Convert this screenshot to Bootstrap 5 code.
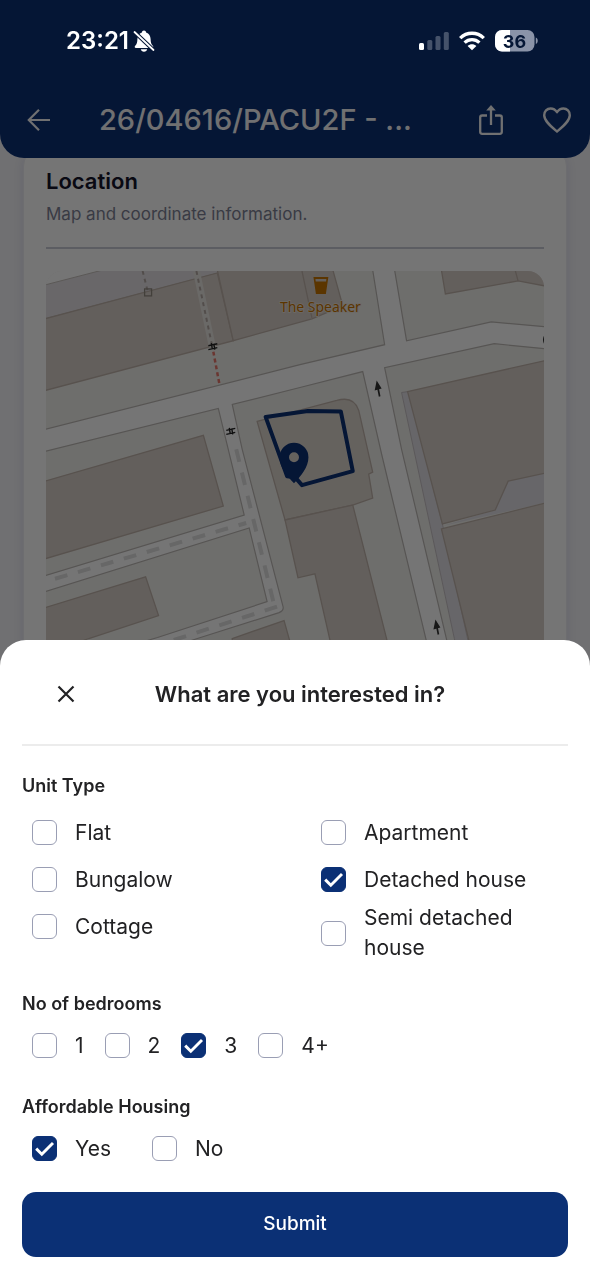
<!DOCTYPE html>
<html lang="en">
<head>
<meta charset="utf-8">
<meta name="viewport" content="width=device-width, initial-scale=1">
<title>Planning application</title>
<link href="https://cdn.jsdelivr.net/npm/bootstrap@5.3.0/dist/css/bootstrap.min.css" rel="stylesheet">
<style>
  :root { --brand: #0b3075; --ink: #222224; }
  body { font-family: Inter, "Liberation Sans", sans-serif; background: #f4f4f8; color: var(--ink); overflow: hidden; }

  .status-bar { height: 82px; gap: 10px; padding: 0 52px 0 66px; z-index: 1060; color: #fff; }
  .status-time { font-size: 24px; font-weight: 600; line-height: 32px; }
  .app-bar { padding: 82px 12px 0 18px; background: var(--brand); border-radius: 0 0 24px 24px; z-index: 1020; }
  .app-bar-row { height: 76px; }
  .app-title { font-size: 29px; font-weight: 500; line-height: 36px; color: #f4f4f6; margin-left: 39px; }
  .bar-btn { width: 42px; height: 42px; padding: 0; border: 0; color: #f4f4f6; line-height: 0; }
  .bar-btn svg { display: block; margin: auto; }

  .info-card { margin: -8px 23px 0; padding: 16px 22px 22px; border: 1px solid #eeeef4; border-radius: 16px; box-shadow: 0 2px 12px #dcdcec; }
  .info-title { font-size: 22px; font-weight: 600; line-height: 28px; color: #14142b; }
  .info-text { font-size: 17px; line-height: 26px; margin-top: 6px; color: #7d8195; }
  .info-rule { margin: 20px 0 22px; border-top: 2px solid #c8cad6; opacity: 1; }
  .map-view { border-radius: 16px; overflow: hidden; }

  .scrim { background: rgba(0, 0, 0, .54); z-index: 1040; }
  .sheet { z-index: 1050; padding: 0 22px 23px; border-radius: 26px 26px 0 0; max-height: 100vh; overflow-y: auto; }
  .sheet-head { height: 106px; padding: 4px 78px 0 0; border-bottom: 2px solid #ececec; }
  .close-btn { width: 88px; height: 48px; padding: 0; border: 0; color: var(--ink); }
  .sheet-title { font-size: 22px; font-weight: 600; line-height: 28px; }
  .group { margin-top: 26px; }
  .group-units { margin-top: 28px; }
  .group legend, .group-units legend { font-size: 18px; font-weight: 600; line-height: 24px; margin-bottom: 6px; }
  .unit-cols { column-gap: 32px; padding: 5px 0 3px; }
  .choice { min-height: 47px; padding-left: 10px; gap: 18px; font-size: 21px; line-height: 30px; }
  .choice .form-check-input { width: 25px; height: 25px; margin: 0; border: 1px solid #9a9eb4; border-radius: 6px; }
  .choice .form-check-input:checked { background-color: var(--brand); border-color: var(--brand);
    background-size: 25px 25px; background-position: center;
    background-image: url("data:image/svg+xml,%3Csvg xmlns='http://www.w3.org/2000/svg' viewBox='0 0 25 25'%3E%3Cpath fill='none' stroke='white' stroke-width='2.9' d='M4.2 12.6l5.6 5.6L21 7'/%3E%3C/svg%3E"); }
  .gap-bedrooms { column-gap: 11px; }
  .gap-yesno { column-gap: 31px; }
  .submit-btn { height: 65px; margin-top: 20px; font-size: 19px; font-weight: 500; color: #fff; background: var(--brand); border: 0; border-radius: 14px; }
  .submit-btn:hover { background: #092760; color: #fff; }
</style>
</head>
<body>

<div class="status-bar fixed-top d-flex align-items-center">
  <div class="d-flex align-items-center gap-1 me-auto">
    <span class="status-time">23:21</span>
    <svg width="22" height="24" viewBox="0 0 22 24" aria-label="Silent">
      <path fill="#fff" d="M11 1.500c1.300 0 2 .8 2.100 1.900 3 .9 4.400 3.500 4.500 6.600.1 3.600.5 5.100 2.200 6.700.9.900.6 2.300-.8 2.300H3c-1.400 0-1.700-1.400-.8-2.300C3.900 15.100 4.300 13.600 4.400 10c.1-3.100 1.500-5.700 4.500-6.600C9 2.300 9.700 1.500 11 1.500zM7.800 20.300h6.400c-.3 1.500-1.500 2.400-3.200 2.400s-2.900-.9-3.200-2.400z"/>
      <path stroke="#051635" stroke-width="4" d="M1 2.500l20 19"/>
      <path stroke="#fff" stroke-width="1.800" stroke-linecap="round" d="M1.500 3l19 18"/>
    </svg>
  </div>
  <svg width="30" height="20" viewBox="0 0 30 20" aria-label="Signal">
    <rect x="0" y="12" width="5" height="7" rx="1.500" fill="#fff"/>
    <g fill="#fff" opacity=".26"><rect x="8.300" y="9" width="5" height="10" rx="1.500"/><rect x="16.500" y="5" width="5" height="14" rx="1.500"/><rect x="24.800" y="1" width="5" height="18" rx="1.500"/></g>
  </svg>
  <svg width="26" height="20" viewBox="0 0 26 20" fill="none" stroke="#fff" aria-label="Wi-Fi">
    <path stroke-width="3.300" d="M1.200 7.100C7.800.6 18.200.6 24.800 7.100"/>
    <path stroke-width="3.300" d="M5.600 11.600c4.200-4 10.600-4 14.800 0"/>
    <path fill="#fff" stroke="none" d="M13 19.300l-4.400-4.400c2.500-2.100 6.300-2.100 8.800 0z"/>
  </svg>
  <svg width="43" height="22" viewBox="0 0 43 22" aria-label="Battery">
    <rect width="39.500" height="21.500" rx="7" fill="#8a93a8"/>
    <path fill="#fff" d="M15 0H7a7 7 0 0 0-7 7v7.500a7 7 0 0 0 7 7h8z"/>
    <path fill="#8a93a8" d="M40.800 7.500c2.600 1.200 2.600 5.300 0 6.500z"/>
    <text x="19.500" y="17.500" font-size="18" font-weight="700" text-anchor="middle" fill="#051635">36</text>
  </svg>
</div>

<header class="app-bar position-relative">
  <div class="app-bar-row d-flex align-items-center">
    <button class="bar-btn btn" type="button" aria-label="Back">
      <svg width="26" height="26" viewBox="0 0 26 26" fill="none" stroke="currentColor" stroke-width="2.200"><path d="M24 13H3M13 2.800L2.800 13 13 23.200"/></svg>
    </button>
    <h1 class="app-title mb-0 flex-fill text-truncate">26/04616/PACU2F - ...</h1>
    <button class="bar-btn btn" type="button" aria-label="Share">
      <svg width="26" height="32" viewBox="0 0 26 32" fill="none" stroke="currentColor" stroke-width="2.300"><path d="M9 11.500H4.200a2 2 0 0 0-2 2v14.300a2 2 0 0 0 2 2h17.600a2 2 0 0 0 2-2V13.500a2 2 0 0 0-2-2H17M13 21V3"/><path d="M13 1l4.800 5.400H8.200z" fill="currentColor" stroke="none"/></svg>
    </button>
    <button class="bar-btn btn ms-4" type="button" aria-label="Save">
      <svg width="30" height="28" viewBox="0 0 30 28" fill="none" stroke="currentColor" stroke-width="2.400" stroke-linejoin="round"><path d="M15 25.500C9 20.400 2.200 15 2.200 9.200 2.200 5.300 5 2.500 8.600 2.500c2.600 0 4.900 1.400 6.400 3.700 1.500-2.300 3.800-3.700 6.400-3.700 3.600 0 6.400 2.800 6.400 6.700C27.800 15 21 20.400 15 25.500z"/></svg>
    </button>
  </div>
</header>

<main>
  <section class="info-card bg-white">
    <h2 class="info-title mb-0">Location</h2>
    <p class="info-text mb-0">Map and coordinate information.</p>
    <hr class="info-rule">
    <div class="map-view">
      <svg class="d-block w-100" viewBox="45 271 500 400" aria-label="Map of the site">
        <rect x="45" y="271" width="500" height="400" fill="#f0efeb"/>
        <!-- paved areas -->
        <path fill="#fff" d="M45 271h60L45 285z"/>
        <path fill="#e4e1e5" stroke="#c6bfbb" d="M44 285L102 270H218v3L44 319z"/>
        <path fill="#e0dee4" stroke="#c6bfc4" d="M402 393l7-1 34 133 32 146h-13L455 640z"/>
        <path fill="#e0dee4" d="M545 474l-36 8-13 29-53 16 102-23z"/>
        <!-- buildings -->
        <g fill="#d8cfc9" stroke="#bfb3aa" stroke-width="1.300">
          <path d="M44 319L217 273l16 68L44 391z"/>
          <path d="M217 270h116l10 36-31 13-79 22z"/>
          <path fill="none" d="M302 271l10 47"/>
          <path d="M442 270l4 24 73-13 27 5v-16zM519 281l-3-11"/>
          <path d="M408 392L546 361V474l-37 8-13 29-53 14z"/>
          <path d="M442 530L546 504V672H477z"/>
          <path d="M44 482L203 436l20 71L44 560z"/>
          <path d="M44 609L145 578l13 39-70 23-44 16z"/>
          <path d="M232 640l52-18 14 50h-66z"/>
          <path fill="#ddd5ce" d="M257 422l80-21q17-5 22 10l14 62-4 2 4 24-20 7-68 15z"/>
          <path d="M285 521l68-15 42 166h-58l-22-97-17 4z"/>
        </g>
        <!-- roads -->
        <path fill="#fff" stroke="#bdb9b6" stroke-width="1.200" d="M44 430L300 365l85-20-12-75h22l12 71 85-19 54 5v22l-51-5-110 24L402 450l45 190 8 32h-21L382 455 363 372l-63 16-68 17 10 45 41 158q1 4-4 6l-82 26-100 32H44l113-33 110-36-18-74L44 593v-16l200-61-26-107L44 452z"/>
        <g fill="none" stroke="#e0e0e0" stroke-width="4" stroke-dasharray="13 11">
          <path d="M236 450l38 156"/><path d="M54 580l192-56"/><path d="M277 608l-130 42"/>
        </g>
        <path d="M196 271l16 76" stroke="#e8e4e0" stroke-width="7"/>
        <path d="M196 271l16 76M142 271l5 20" stroke="#b3a9a4" stroke-width="2" stroke-dasharray="4 4"/>
        <path d="M213 352l6 32" stroke="#e8776b" stroke-width="2.500" stroke-dasharray="4 3"/>
        <rect x="144" y="289" width="7" height="7" fill="none" stroke="#938b82" stroke-width="1.300"/>
        <path d="M208 346l9-2M208 350l9-2M211 343.500l1 6M213.500 344l1 6M226 431l9-2M226 435l9-2M229 428.500l1 6M231.500 429l1 6" stroke="#222" stroke-width="1.400"/>
        <path d="M380 397l-2-10M439 636l-2-10" stroke="#333" stroke-width="1.700"/>
        <path d="M377 381l5 8-7 2zM436 621l5 8-7 2z" fill="#333"/>
        <path d="M545 336q-2 4 0 8" fill="#333"/>
        <!-- bar marker -->
        <path fill="#c77400" fill-rule="evenodd" d="M313.500 277h15l-2.500 17h-10zM315.500 279l.3 2.500h10.400l.3-2.500z"/>
        <text x="320.500" y="312" text-anchor="middle" font-family="Noto Sans, sans-serif" font-size="14" fill="#c77400" stroke="#eee6dd" stroke-width="1.500" paint-order="stroke">The Speaker</text>
        <!-- site outline and pin -->
        <path d="M265.500 417.500L308 411.500l33 .5 12 60-51 14-7-8-8-1z" fill="none" stroke="#0b3075" stroke-width="4" stroke-linejoin="round"/>
        <path fill="#0b3075" fill-rule="evenodd" d="M294 484c-7-7-14.500-16-14.500-26a14.500 14.500 0 0 1 29 0c0 10-7.500 19-14.500 26zM294 453a5 5 0 1 0 0 10 5 5 0 0 0 0-10z"/>
      </svg>
    </div>
  </section>
</main>

<div class="scrim position-fixed top-0 start-0 w-100 h-100"></div>

<form class="sheet fixed-bottom bg-white" role="dialog" aria-labelledby="sheetTitle">
  <div class="sheet-head d-flex align-items-center">
    <button class="close-btn btn" type="button" aria-label="Close">
      <svg class="d-block mx-auto" width="18" height="18" viewBox="0 0 18 18" stroke="currentColor" stroke-width="2.200"><path d="M1.500 1.500l15 15M16.500 1.500l-15 15"/></svg>
    </button>
    <h2 class="sheet-title mb-0 flex-fill text-center" id="sheetTitle">What are you interested in?</h2>
  </div>

  <fieldset class="group-units">
    <legend>Unit Type</legend>
    <div class="unit-cols d-flex">
      <div class="w-50">
        <label class="choice d-flex align-items-center"><input class="form-check-input flex-shrink-0" type="checkbox">Flat</label>
        <label class="choice d-flex align-items-center"><input class="form-check-input flex-shrink-0" type="checkbox">Bungalow</label>
        <label class="choice d-flex align-items-center"><input class="form-check-input flex-shrink-0" type="checkbox">Cottage</label>
      </div>
      <div class="w-50">
        <label class="choice d-flex align-items-center"><input class="form-check-input flex-shrink-0" type="checkbox">Apartment</label>
        <label class="choice d-flex align-items-center"><input class="form-check-input flex-shrink-0" type="checkbox" checked>Detached house</label>
        <label class="choice d-flex align-items-center"><input class="form-check-input flex-shrink-0" type="checkbox">Semi detached house</label>
      </div>
    </div>
  </fieldset>

  <fieldset class="group">
    <legend>No of bedrooms</legend>
    <div class="gap-bedrooms d-flex flex-wrap">
      <label class="choice d-flex align-items-center"><input class="form-check-input flex-shrink-0" type="checkbox">1</label>
      <label class="choice d-flex align-items-center"><input class="form-check-input flex-shrink-0" type="checkbox">2</label>
      <label class="choice d-flex align-items-center"><input class="form-check-input flex-shrink-0" type="checkbox" checked>3</label>
      <label class="choice d-flex align-items-center"><input class="form-check-input flex-shrink-0" type="checkbox">4+</label>
    </div>
  </fieldset>

  <fieldset class="group">
    <legend>Affordable Housing</legend>
    <div class="gap-yesno d-flex flex-wrap">
      <label class="choice d-flex align-items-center"><input class="form-check-input flex-shrink-0" type="checkbox" checked>Yes</label>
      <label class="choice d-flex align-items-center"><input class="form-check-input flex-shrink-0" type="checkbox">No</label>
    </div>
  </fieldset>

  <button class="submit-btn btn w-100" type="submit">Submit</button>
</form>

<script src="https://cdn.jsdelivr.net/npm/bootstrap@5.3.0/dist/js/bootstrap.bundle.min.js"></script>
</body>
</html>
